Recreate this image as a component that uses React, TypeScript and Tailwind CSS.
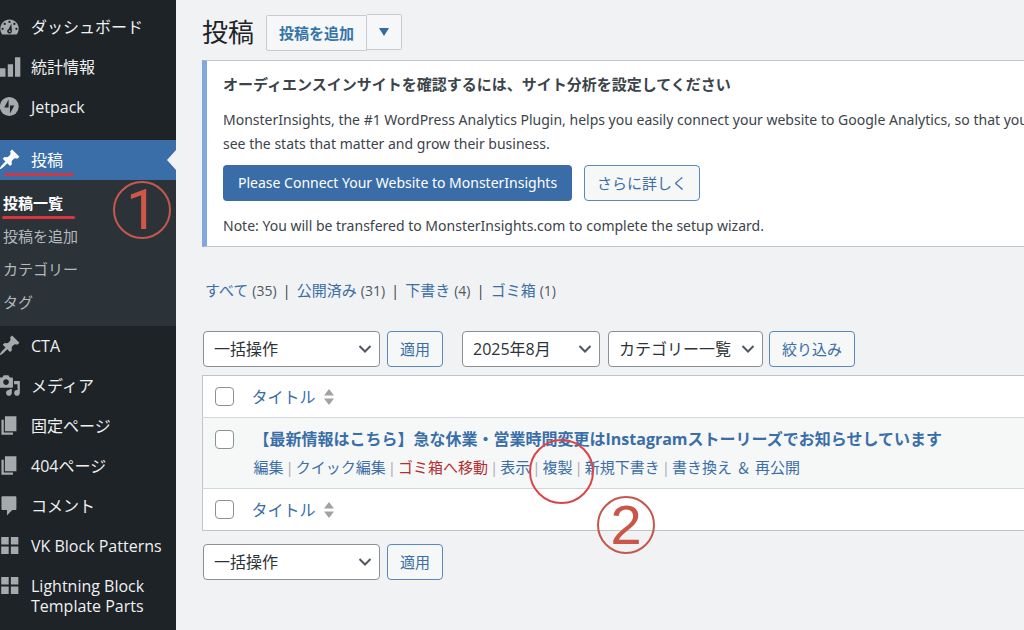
import type { ReactNode } from "react";

interface MenuItemProps {
    label: string,
    icon: ReactNode,
}

interface SelectBoxProps {
    label: string,
    value: string,
    className: string,
}

const Icon = ({ children }: { children: ReactNode }) => (
    <svg viewBox="0 0 20 20" className="-ml-0.5 size-[23px] shrink-0 -my-0.5 fill-current" aria-hidden="true">
        {children}
    </svg>
);

const pin = (
    <path d="M10.44 3.02l1.82-1.82 6.36 6.35-1.83 1.82c-1.05-.68-2.48-.57-3.41.36l-.75.75c-.92.93-1.04 2.35-.35 3.41l-1.83 1.82-2.41-2.41-2.8 2.79c-.42.42-3.38 2.71-3.8 2.29s1.86-3.39 2.28-3.81l2.79-2.79L4.1 9.36l1.83-1.82c1.05.69 2.48.57 3.4-.36l.75-.75c.93-.92 1.05-2.35.36-3.41z" />
);

const pages = <path d="M6 15V2h10v13H6zm-1 1h8v2H3V5h2v11z" />;

const blocks = <path d="M2.8 2.6h6.500v6.500h-6.500zM11.2 2.6h6.500v6.500h-6.500zM2.8 10.8h6.500v6.500h-6.500zM11.2 10.8h6.500v6.500h-6.500z" />;

const gauge = (
    <>
        <path d="M3.76 17h12.48A8 8 0 0 0 18 12.01C18 7.59 14.42 4 10 4s-8 3.59-8 8.01c0 1.9.66 3.64 1.76 4.99z" />
        <g className="fill-[#1d2327]">
            <circle cx="10" cy="6" r="1" />
            <circle cx="5.8" cy="7.8" r="1" />
            <circle cx="14.2" cy="7.8" r="1" />
            <circle cx="4" cy="12" r="1" />
            <circle cx="16" cy="12" r="1" />
            <path d="M11.6 7.6l.5 6.1a2.1 2.1 0 1 1-2.9-1.6z" />
        </g>
        <circle cx="10.2" cy="14" r=".8" />
    </>
);

const topItems: MenuItemProps[] = [
    { label: "ダッシュボード", icon: gauge },
    { label: "統計情報", icon: <path d="M1.500 11.500h5v7.500h-5zM8.500 8h4.600v11H8.500zM14.800 2h4.600v17h-4.600z" /> },
    {
        label: "Jetpack",
        icon: (
            <>
                <circle cx="9.8" cy="10" r="8.200" />
                <path className="fill-[#1d2327]" d="M9.2 4v6.800H5.400zM10.400 16V9.200h3.800z" />
            </>
        ),
    },
];

const bottomItems: MenuItemProps[] = [
    { label: "CTA", icon: pin },
    {
        label: "メディア",
        icon: (
            <path d="M13 11V4c0-.55-.45-1-1-1h-1.67L9 1H5L3.67 3H2c-.55 0-1 .45-1 1v7c0 .55.45 1 1 1h10c.55 0 1-.45 1-1zM7 4.5c1.38 0 2.5 1.12 2.5 2.5S8.38 9.5 7 9.5 4.5 8.38 4.5 7 5.62 4.5 7 4.5zM14 6h5v10.5c0 1.38-1.12 2.5-2.5 2.5S14 17.88 14 16.5s1.12-2.5 2.5-2.5c.17 0 .34.02.5.05V9h-3V6zm-4 8.05V13h2v3.5c0 1.38-1.12 2.5-2.5 2.5S7 17.88 7 16.5 8.12 14 9.5 14c.17 0 .34.02.5.05z" />
        ),
    },
    { label: "固定ページ", icon: pages },
    { label: "404ページ", icon: pages },
    { label: "コメント", icon: <path d="M4 2h11c.6 0 1 .4 1 1v10c0 .6-.4 1-1 1h-2.600l-4.600 4.600V14H4c-.6 0-1-.4-1-1V3c0-.6.4-1 1-1z" /> },
    { label: "VK Block Patterns", icon: blocks },
    { label: "Lightning Block Template Parts", icon: blocks },
];

const rowActions = ["編集", "クイック編集", "ゴミ箱へ移動", "表示", "複製", "新規下書き", "書き換え ＆ 再公開"];

const statuses = [
    { label: "すべて", count: 35 },
    { label: "公開済み", count: 31 },
    { label: "下書き", count: 4 },
    { label: "ゴミ箱", count: 1 },
];

const MenuItem = ({ label, icon }: MenuItemProps) => (
    <li>
        <a href="#" className="flex items-start gap-2.5 py-2.5 pr-2 text-base leading-5 text-[#f0f0f1]">
            <span className="text-[#a7aaad]"><Icon>{icon}</Icon></span>
            {label}
        </a>
    </li>
);

const SelectBox = ({ label, value, className }: SelectBoxProps) => (
    <div className={`relative ${className}`}>
        <select aria-label={label} className="h-9 w-full appearance-none rounded border border-[#8c8f94] bg-white pl-2.5 text-base leading-6 text-[#2c3338]">
            <option>{value}</option>
        </select>
        <svg viewBox="0 0 14 8" className="pointer-events-none absolute right-2 top-3.5 h-2 w-3.5 fill-none stroke-[#50575e] stroke-2" aria-hidden="true">
            <path d="M1.500 1l5.500 5.500L12.500 1" />
        </svg>
    </div>
);

const OutlineButton = ({ children }: { children: ReactNode }) => (
    <button type="button" className="h-9 rounded border border-[#5b88b8] bg-[#f6f7f7] px-3 text-[15px] leading-6 text-[#3a6ea5]">
        {children}
    </button>
);

const TitleHeading = ({ id }: { id: string }) => (
    <tr className="h-[42px] bg-white">
        <td className="w-[49px] pl-3">
            <input id={id} type="checkbox" aria-label="すべて選択" className="block size-[19px] appearance-none rounded border border-[#8c8f94] bg-white" />
        </td>
        <th className="text-left font-normal">
            <a href="#" className="flex items-center gap-2 text-base text-[#3a6ea5]">
                タイトル
                <svg viewBox="0 0 10 16" className="h-4 w-2.5 fill-[#a0a3a6]" aria-hidden="true">
                    <path d="M5 0l5 6.500H0zM5 16l5-6.500H0z" />
                </svg>
            </a>
        </th>
    </tr>
);

const App = () => {
    return (
        <div className="flex min-h-screen overflow-hidden bg-[#f1f2f4] font-['Open_Sans','Noto_Sans_CJK_JP',sans-serif] text-[#3c434a]">
            <nav className="relative w-44 shrink-0 bg-[#1d2327] pt-[7px]" aria-label="管理メニュー">
                <ul>
                    {topItems.map((item) => <MenuItem key={item.label} {...item} />)}
                </ul>
                <div className="relative mt-[13px] bg-[#3a6ea9]">
                    <a href="#" className="flex gap-2.5 py-2.5 text-base leading-5 text-white">
                        <Icon>{pin}</Icon>
                        投稿
                    </a>
                    <span className="absolute right-0 top-2.5 border-y-10 border-r-9 border-y-transparent border-r-[#f1f2f4]" />
                    <span className="absolute bottom-1 left-1 h-[3px] w-[70px] rounded-full bg-[#c93a48]" />
                </div>
                <ul className="relative bg-[#2c3338] py-[7px] pl-[3px] text-[15px] leading-[33px] text-[#b4b9be]">
                    <li><a href="#" className="block font-bold text-white">投稿一覧</a></li>
                    <li><a href="#" className="block">投稿を追加</a></li>
                    <li><a href="#" className="block">カテゴリー</a></li>
                    <li><a href="#" className="block">タグ</a></li>
                    <li className="absolute left-0.5 top-9 h-[3px] w-[73px] rounded-full bg-[#d8363c]" aria-hidden="true" />
                    <li className="absolute right-[5px] top-px flex size-[58px] items-center justify-center rounded-full border-2 border-[#c4584d] font-[Roboto,sans-serif] text-[56px] leading-none text-[#cf5747]">1</li>
                </ul>
                <ul>
                    {bottomItems.map((item) => <MenuItem key={item.label} {...item} />)}
                </ul>
            </nav>

            <main className="min-w-0 flex-1 pl-[26px] pt-3.5">
                <div className="flex items-start">
                    <h1 className="text-[26px] leading-9 text-[#1d2327]">投稿</h1>
                    <a href="#" className="ml-3 mt-px flex h-9 items-center rounded-l-xs border border-[#c8cbd0] bg-[#f6f7f8] px-3 text-[15px] font-bold text-[#3474a8]">投稿を追加</a>
                    <button type="button" aria-label="その他の追加方法" className="flex h-9 w-[35px] items-center justify-center rounded-r-xs border border-l-0 border-[#c8cbd0] bg-[#f6f7f8]">
                        <svg viewBox="0 0 10 8" className="h-2 w-2.5 fill-[#2f6da3]" aria-hidden="true"><path d="M0 0h10L5 8z" /></svg>
                    </button>
                </div>

                <section className="mt-[9px] whitespace-nowrap border-y border-l-5 border-y-[#c3c4c7] border-l-[#80a8dc] bg-white pb-2 pl-4 pt-[11px] font-['Noto_Sans','Noto_Sans_CJK_JP',sans-serif] text-sm leading-6">
                    <h2 className="text-[15px] font-bold leading-6">オーディエンスインサイトを確認するには、サイト分析を設定してください</h2>
                    <p className="mt-3">
                        MonsterInsights, the #1 WordPress Analytics Plugin, helps you easily connect your website to Google Analytics, so that you can<br />
                        see the stats that matter and grow their business.
                    </p>
                    <div className="mt-[9px] flex gap-3">
                        <button type="button" className="h-9 rounded bg-[#3a6da8] px-[15px] text-white">Please Connect Your Website to MonsterInsights</button>
                        <OutlineButton>さらに詳しく</OutlineButton>
                    </div>
                    <p className="mt-[13px]">Note: You will be transfered to MonsterInsights.com to complete the setup wizard.</p>
                </section>

                <ul className="mt-[31px] flex pl-[3px] text-[15px] leading-6">
                    {statuses.map((status, i) => (
                        <li key={status.label}>
                            {i > 0 && <span className="px-1.5">|</span>}
                            <a href="#" className="text-[#3a6ea5]">{status.label} <span className="text-sm text-[#50575e]">({status.count})</span></a>
                        </li>
                    ))}
                </ul>

                <form className="mt-[29px] flex pl-px">
                    <SelectBox label="一括操作を選択" value="一括操作" className="mr-[7px] w-[177px]" />
                    <OutlineButton>適用</OutlineButton>
                    <SelectBox label="日付で絞り込む" value="2025年8月" className="ml-[19px] mr-2 w-[138px]" />
                    <SelectBox label="カテゴリーで絞り込む" value="カテゴリー一覧" className="mr-1.5 w-[155px]" />
                    <OutlineButton>絞り込み</OutlineButton>
                </form>

                <div className="relative mt-2">
                    <table className="w-full border-collapse border-y border-l border-[#c3c4c7]">
                        <thead><TitleHeading id="select-top" /></thead>
                        <tbody>
                            <tr className="h-[71px] border-y border-[#d5d6d9] bg-[#f6f7f7] align-top">
                                <td className="pl-3 pt-3">
                                    <input type="checkbox" aria-label="投稿を選択" className="block size-[19px] appearance-none rounded border border-[#8c8f94] bg-white" />
                                </td>
                                <td className="whitespace-nowrap pl-0.5 pt-[7px]">
                                    <a href="#" className="block text-base leading-7 font-bold text-[#3a6ea9]">【最新情報はこちら】急な休業・営業時間変更はInstagramストーリーズでお知らせしています</a>
                                    <div className="flex text-[15px] leading-7 text-[#3a6ea5]">
                                        {rowActions.map((action, i) => (
                                            <span key={action}>
                                                {i > 0 && <span className="px-0.5 text-[#a7aaad]">|</span>}
                                                <a href="#" className={action === "ゴミ箱へ移動" ? "text-[#b32d2e]" : ""}>{action}</a>
                                            </span>
                                        ))}
                                    </div>
                                </td>
                            </tr>
                        </tbody>
                        <tfoot><TitleHeading id="select-bottom" /></tfoot>
                    </table>
                    <span className="absolute left-[327px] top-16 size-[65px] rounded-full border-2 border-[#d9444a]" />
                    <span className="absolute left-[395px] top-[121px] flex size-[58px] items-center justify-center rounded-full border-2 border-[#c4584d] font-['Liberation_Sans',sans-serif] text-[56px] leading-none text-[#c95646]">2</span>
                </div>

                <form className="mt-[13px] flex gap-[7px] pl-px">
                    <SelectBox label="一括操作を選択" value="一括操作" className="w-[177px]" />
                    <OutlineButton>適用</OutlineButton>
                </form>
            </main>
        </div>
    )
};

export default App;
